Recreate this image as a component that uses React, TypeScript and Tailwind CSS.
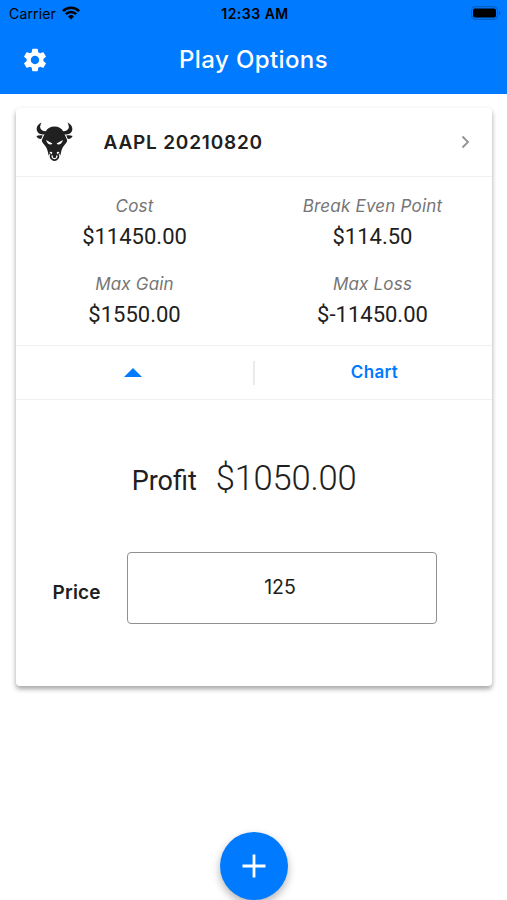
import { MdSettings } from "react-icons/md";

const metrics = [
  { label: "Cost", value: "$11450.00" },
  { label: "Break Even Point", value: "$114.50" },
  { label: "Max Gain", value: "$1550.00" },
  { label: "Max Loss", value: "$-11450.00" },
];

function WifiIcon() {
  return (
    <svg width="18" height="14" viewBox="0 0 18 14" fill="none" stroke="black" strokeWidth="2.6">
      <path d="M0.9 5.1a11.5 11.5 0 0 1 16.2 0" />
      <path d="M3.8 8.2a7.4 7.4 0 0 1 10.4 0" />
      <path d="M9 13.6 6 10.5a4.3 4.3 0 0 1 6 0z" fill="black" stroke="none" />
    </svg>
  );
}

function BatteryIcon() {
  return (
    <svg width="30" height="14" viewBox="0 0 30 14">
      <rect x="0.5" y="0.7" width="26" height="12.6" rx="3.6" fill="none" stroke="#0357b4" strokeWidth="1" />
      <rect x="2" y="2.5" width="23" height="9" rx="2" fill="black" />
      <path d="M28 4.8c2 .8 2 3.6 0 4.4z" fill="#0357b4" />
    </svg>
  );
}

function BullIcon() {
  return (
    <svg width="37" height="40" viewBox="0 0 36 40" fill="#202020" preserveAspectRatio="none">
      {/* horns */}
      <path d="M5.4 0.5C0.8 2.4-.7 7.4 1.9 10.5c1.7 1.9 4.6 2.2 6.6 1.7l2-3C7 9.4 3.6 7.6 4.1 4.3 4.3 2.9 4.8 1.8 5.4.5z" />
      <path d="M30.6.5c4.6 1.9 6.1 6.9 3.5 10-1.7 1.9-4.6 2.2-6.6 1.7l-2-3c3.5.2 6.9-1.6 6.4-4.9-.2-1.4-.7-2.5-1.3-3.8z" />
      {/* ears */}
      <path d="M0.4 13.9c2-.8 4.1-1 6.2-.4l-1.600 3.400c-2 .1-3.900-.9-4.600-3z" />
      <path d="M35.6 13.9c-2-.8-4.1-1-6.2-.4l1.600 3.400c2 .1 3.900-.9 4.600-3z" />
      {/* head */}
      <path d="M18 4.6c3.700.1 6.900 1.700 8.600 4.800l3.600 8.300c.4 1.500-.5 2.800-1.700 4.200-2.700 2.900-3.700 5.600-4.200 8.900-.4 2.700-1.500 4.700-3.200 5.300h-6.200c-1.700-.6-2.800-2.600-3.200-5.300-.5-3.300-1.500-6-4.200-8.900-1.200-1.400-2.100-2.700-1.700-4.200l3.600-8.300c1.700-3.100 4.900-4.700 8.600-4.800z" />
      <path d="m9.800 18 6.200 3.500c-1.300 2-5 1.200-6.200-3.500zM26.200 18 20 21.500c1.300 2 5 1.200 6.200-3.500z" fill="white" />
      {/* nostrils */}
      <path d="M13 31.400c.3-1.900 1.900-2.200 2.900-.9l-.8 2.200c-.4-1.100-1.100-1.500-2.100-1.300z" fill="white" />
      <path d="M23 31.400c-.3-1.900-1.900-2.200-2.900-.9l.8 2.200c.4-1.100 1.100-1.500 2.100-1.300z" fill="white" />
      {/* nose ring */}
      <path d="M14.8 32.900a3.600 3.600 0 1 0 6.400 0" fill="none" stroke="white" strokeWidth="4" />
      <path d="M14.8 32.500a3.700 3.700 0 1 0 6.400 0" fill="none" stroke="#202020" strokeWidth="1.7" />
    </svg>
  );
}

export default function App() {
  return (
    <div className="flex h-[900px] w-[507px] flex-col overflow-hidden bg-white font-['Inter',sans-serif] text-[#202020]">
      <header className="h-[93.5px] shrink-0 bg-[#007aff]">
        <div className="grid h-7 grid-cols-3 items-center pb-[2px] pl-[9px] pr-[6px] text-black">
          <div className="flex items-center gap-[6px]">
            <span className="text-[14px] tracking-[0.15px]">Carrier</span>
            <WifiIcon />
          </div>
          <span className="text-center text-[14px] font-semibold tracking-[0.5px]">12:33 AM</span>
          <div className="flex justify-end">
            <BatteryIcon />
          </div>
        </div>
        <div className="grid h-16 grid-cols-[70px_1fr_70px] items-center text-white">
          <MdSettings className="ml-[21px] size-7" />
          <h1 className="text-center text-2xl font-medium tracking-[0.4px]">Play Options</h1>
        </div>
      </header>

      <main className="mx-[15.5px] mt-[14.5px] h-[578px] shrink-0 rounded-[4px] bg-white shadow-[0_3px_5px_rgba(0,0,0,0.36)]">
        <div className="flex h-[69px] items-center border-b border-[#f0f0f0] pl-[20px] pr-[22px]">
          <BullIcon />
          <h2 className="ml-[31px] flex-1 pt-[2px] text-[19px] font-semibold tracking-[0.8px]">AAPL 20210820</h2>
          <svg width="9" height="14" viewBox="0 0 9 14" fill="none" stroke="#929292" strokeWidth="1.8">
            <path d="m1.5 1.5 5.500 5.500-5.500 5.500" />
          </svg>
        </div>

        <div className="grid h-[169px] grid-cols-2 content-start gap-y-5 border-b border-[#f0f0f0] pt-4 text-center">
          {metrics.map((m) => (
            <div key={m.label} className="h-[58px]">
              <p className="text-[17px] italic leading-[26px] tracking-[0.2px] text-[#757575]">{m.label}</p>
              <p className="mt-1 font-['Roboto',sans-serif] text-[22px] leading-7">{m.value}</p>
            </div>
          ))}
        </div>

        <div className="flex h-[54px] items-center border-b border-[#f0f0f0] text-[#007aff]">
          <button className="flex flex-1 justify-center pr-[3px]">
            <svg width="18" height="9" viewBox="0 0 18 9" fill="currentColor">
              <path d="m0 9 9-9 9 9z" />
            </svg>
          </button>
          <div className="h-6 w-[2px] bg-[#ebebeb]" />
          <button className="flex-1 pl-[3px] pt-px text-[17px] font-semibold tracking-[0.3px]">Chart</button>
        </div>

        <div className="flex items-baseline justify-center gap-[19px] pt-[54px] pr-[19px] font-['Roboto',sans-serif]">
          <span className="text-[27px] leading-[48px]">Profit</span>
          <span className="text-[34.5px] font-light leading-[48px] tracking-[-0.2px]">$1050.00</span>
        </div>

        <div className="mt-[46.5px] flex items-center pl-[37px]">
          <label htmlFor="price" className="w-[74.5px] pt-[11px] text-[19px] font-semibold tracking-[0.2px]">
            Price
          </label>
          <input
            id="price"
            defaultValue="125"
            className="h-[72px] w-[310px] rounded-[4px] border-[1.5px] border-[#919191] pr-1 pb-[2px] text-center text-[19.5px] outline-none"
          />
        </div>
      </main>

      <button className="mx-auto mt-[146px] flex size-[68px] shrink-0 items-center justify-center rounded-full bg-[#007aff] shadow-[0_4px_8px_rgba(0,0,0,0.3)]">
        <svg width="24" height="24" viewBox="0 0 24 24" stroke="white" strokeWidth="2.8">
          <path d="M12 0.5v23M0.5 12h23" />
        </svg>
      </button>
    </div>
  );
}
